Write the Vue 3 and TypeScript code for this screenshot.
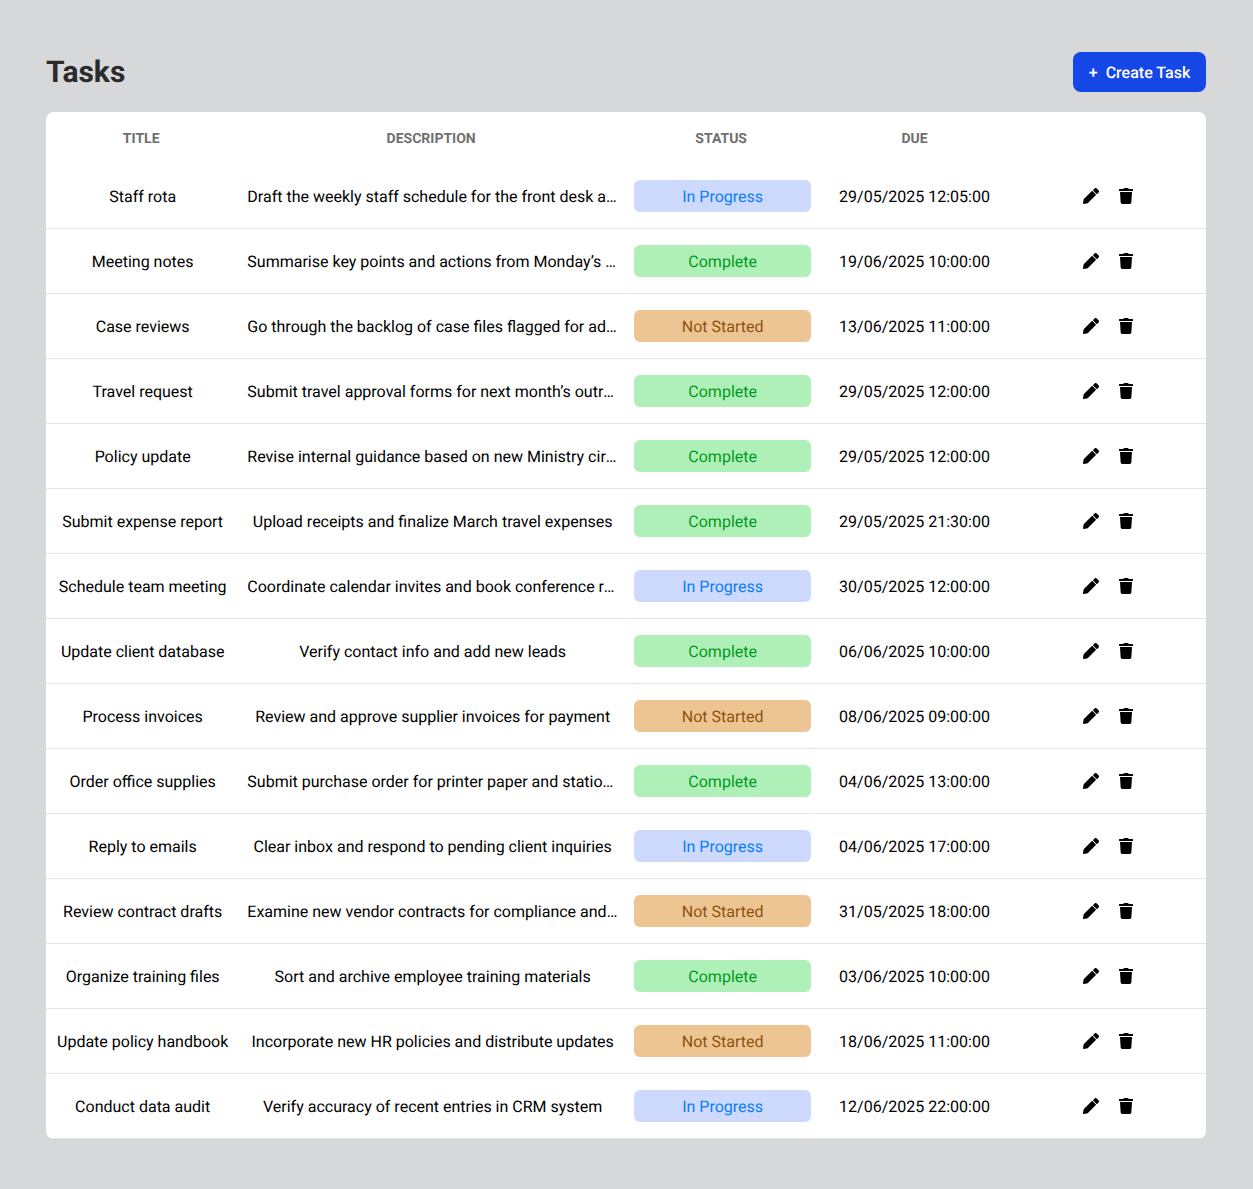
<script setup lang="ts">
type Status = 'In Progress' | 'Complete' | 'Not Started'

interface Task {
  title: string
  description: string
  status: Status
  due: string
}

const statusClass: Record<Status, string> = {
  'In Progress': 'in-progress',
  Complete: 'complete',
  'Not Started': 'not-started'
}

const tasks: Task[] = [
  { title: 'Staff rota', description: 'Draft the weekly staff schedule for the front desk and reception team', status: 'In Progress', due: '29/05/2025 12:05:00' },
  { title: 'Meeting notes', description: 'Summarise key points and actions from Monday’s management meeting', status: 'Complete', due: '19/06/2025 10:00:00' },
  { title: 'Case reviews', description: 'Go through the backlog of case files flagged for additional review', status: 'Not Started', due: '13/06/2025 11:00:00' },
  { title: 'Travel request', description: 'Submit travel approval forms for next month’s outreach programme', status: 'Complete', due: '29/05/2025 12:00:00' },
  { title: 'Policy update', description: 'Revise internal guidance based on new Ministry circular and notes', status: 'Complete', due: '29/05/2025 12:00:00' },
  { title: 'Submit expense report', description: 'Upload receipts and finalize March travel expenses', status: 'Complete', due: '29/05/2025 21:30:00' },
  { title: 'Schedule team meeting', description: 'Coordinate calendar invites and book conference room for the team', status: 'In Progress', due: '30/05/2025 12:00:00' },
  { title: 'Update client database', description: 'Verify contact info and add new leads', status: 'Complete', due: '06/06/2025 10:00:00' },
  { title: 'Process invoices', description: 'Review and approve supplier invoices for payment', status: 'Not Started', due: '08/06/2025 09:00:00' },
  { title: 'Order office supplies', description: 'Submit purchase order for printer paper and stationery for the office', status: 'Complete', due: '04/06/2025 13:00:00' },
  { title: 'Reply to emails', description: 'Clear inbox and respond to pending client inquiries', status: 'In Progress', due: '04/06/2025 17:00:00' },
  { title: 'Review contract drafts', description: 'Examine new vendor contracts for compliance and legal requirements', status: 'Not Started', due: '31/05/2025 18:00:00' },
  { title: 'Organize training files', description: 'Sort and archive employee training materials', status: 'Complete', due: '03/06/2025 10:00:00' },
  { title: 'Update policy handbook', description: 'Incorporate new HR policies and distribute updates', status: 'Not Started', due: '18/06/2025 11:00:00' },
  { title: 'Conduct data audit', description: 'Verify accuracy of recent entries in CRM system', status: 'In Progress', due: '12/06/2025 22:00:00' }
]
</script>

<template>
  <main class="page">
    <header class="top">
      <h1>Tasks</h1>
      <button class="create" type="button"><span class="plus">+</span>Create Task</button>
    </header>

    <section class="card">
      <div class="head">
        <div class="th">Title</div>
        <div class="th">Description</div>
        <div class="th">Status</div>
        <div class="th">Due</div>
        <div class="th"></div>
      </div>

      <div v-for="task in tasks" :key="task.title" class="row">
        <div class="cell text">{{ task.title }}</div>
        <div class="cell text">{{ task.description }}</div>
        <div class="cell">
          <span class="badge" :class="statusClass[task.status]">{{ task.status }}</span>
        </div>
        <div class="cell text due">{{ task.due }}</div>
        <div class="cell actions">
          <svg class="icon" viewBox="0 0 512 512" aria-hidden="true">
            <path d="M497.9 142.1l-46.1 46.1c-4.7 4.7-12.3 4.7-17 0l-111-111c-4.7-4.7-4.7-12.3 0-17l46.1-46.1c18.7-18.7 49.1-18.7 67.9 0l60.1 60.1c18.8 18.7 18.8 49.1 0 67.9zM284.2 99.8L21.6 362.4.4 483.9c-2.9 16.4 11.4 30.6 27.8 27.8l121.5-21.3 262.6-262.6c4.7-4.7 4.7-12.3 0-17l-111-111c-4.8-4.7-12.4-4.7-17.1 0z" />
          </svg>
          <svg class="icon trash" viewBox="0 0 448 512" aria-hidden="true">
            <path d="M432 32H312l-9.4-18.7A24 24 0 0 0 281.1 0H166.8a23.72 23.72 0 0 0-21.4 13.3L136 32H16A16 16 0 0 0 0 48v32a16 16 0 0 0 16 16h416a16 16 0 0 0 16-16V48a16 16 0 0 0-16-16zM53.2 467a48 48 0 0 0 47.9 45h245.8a48 48 0 0 0 47.9-45L416 128H32z" />
          </svg>
        </div>
      </div>
    </section>
  </main>
</template>

<style>
html,
body {
  background: #d7d8da;
}
</style>

<style scoped>
.page {
  padding: 52px 47px 50px 46px;
  font-family: Roboto, "Liberation Sans", sans-serif;
  color: #000;
  text-rendering: geometricPrecision;
}

.top {
  display: flex;
  align-items: center;
  justify-content: space-between;
  height: 40px;
  margin-bottom: 20px;
}

h1 {
  margin: 0;
  padding-top: 2px;
  font-size: 30px;
  line-height: 36px;
  font-weight: 700;
  color: #2b2b2b;
}

.create {
  display: flex;
  align-items: center;
  justify-content: center;
  gap: 8px;
  width: 133px;
  height: 40px;
  border: 0;
  border-radius: 8px;
  background: #1447e6;
  color: #fff;
  font: 500 16px Roboto, sans-serif;
  text-rendering: geometricPrecision;
}

.plus {
  font-size: 16px;
}

.card {
  background: #fff;
  border-radius: 8px;
  overflow: hidden;
}

.head,
.row {
  display: grid;
  grid-template-columns: 1fr 2fr 1fr 1fr 1fr;
}

.head {
  height: 52px;
}

.th {
  padding: 1px 11px 0 8px;
  display: flex;
  align-items: center;
  justify-content: center;
  font-size: 14px;
  font-weight: 700;
  text-transform: uppercase;
  color: #6f6f6f;
}

.row {
  box-sizing: border-box;
  height: 65px;
  border-bottom: 1px solid #e5e5e5;
  align-items: center;
}

.cell {
  padding: 0 8px;
  overflow: hidden;
  white-space: nowrap;
  text-overflow: ellipsis;
  text-align: center;
  font-size: 16px;
  line-height: 24px;
}

.text {
  padding-top: 2px;
}

.due {
  padding-right: 11px;
}

.badge {
  display: block;
  height: 32px;
  line-height: 34px;
  border-radius: 6px;
}

.in-progress {
  background: #cddafd;
  color: #0a7cff;
}

.complete {
  background: #aff0b9;
  color: #009a20;
}

.not-started {
  background: #edc592;
  color: #8f5210;
}

.actions {
  display: flex;
  justify-content: center;
  gap: 20px;
  padding-right: 10px;
}

.icon {
  width: 16px;
  height: 16px;
  fill: #000;
}

.trash {
  width: 14px;
}
</style>
